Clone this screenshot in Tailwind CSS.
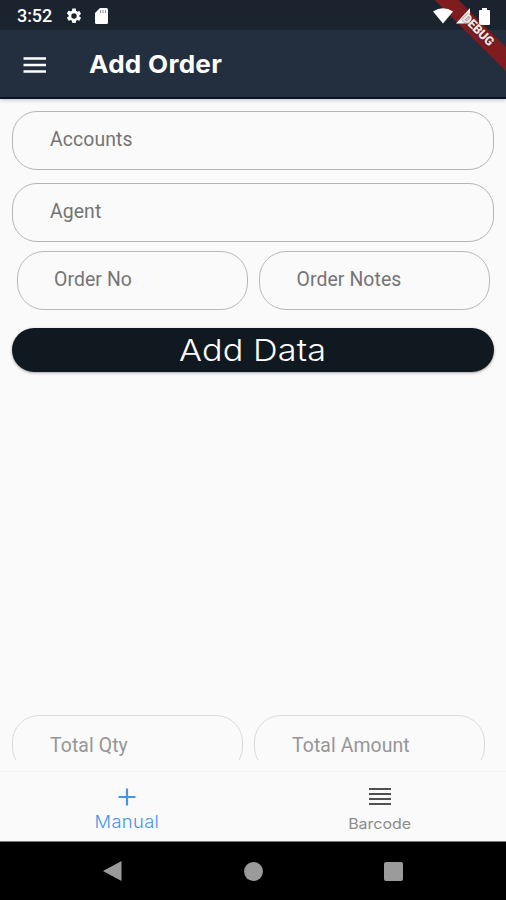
<!DOCTYPE html>
<html lang="en">
<head>
<meta charset="utf-8">
<title>Add Order</title>
<script src="https://cdn.jsdelivr.net/npm/@tailwindcss/browser@4"></script>
</head>
<body class="bg-[#fafafa]">
<div class="relative flex h-[900px] w-[506px] flex-col overflow-hidden bg-[#fafafa] font-[Roboto,sans-serif]">
  <div class="flex h-[30px] shrink-0 items-center bg-[#1b242e] pl-[17px] pr-[16px] pt-[2px] text-white">
    <span class="w-[48px] text-[18px] leading-none font-medium tracking-[-0.1px]">3:52</span>
    <svg class="h-[18px] w-[18px]" viewBox="0 0 24 24" fill="currentColor"><path d="M19.14 12.94c.04-.3.06-.61.06-.94s-.02-.64-.07-.94l2.03-1.58a.49.49 0 0 0 .12-.61l-1.92-3.32a.49.49 0 0 0-.59-.22l-2.39.96a7 7 0 0 0-1.62-.94l-.36-2.54A.48.48 0 0 0 13.92 2h-3.84a.48.48 0 0 0-.48.41l-.36 2.54a7 7 0 0 0-1.62.94l-2.39-.96a.48.48 0 0 0-.59.22L2.72 8.47a.48.48 0 0 0 .12.61l2.03 1.58a6 6 0 0 0 0 1.88l-2.03 1.58a.49.49 0 0 0-.12.61l1.92 3.32c.12.22.37.29.59.22l2.39-.96c.5.38 1.03.7 1.62.94l.36 2.54c.05.24.24.41.48.41h3.84c.24 0 .44-.17.47-.41l.36-2.54a7 7 0 0 0 1.62-.94l2.39.96c.22.08.47 0 .59-.22l1.92-3.32a.48.48 0 0 0-.12-.61zM12 15.6A3.6 3.6 0 1 1 12 8.4a3.6 3.6 0 0 1 0 7.2z"/></svg>
    <svg class="ml-[12px] h-[16px] w-[13px]" viewBox="0 0 13 16"><path d="M5 0h6.5Q13 0 13 1.5v13Q13 16 11.500 16h-10Q0 16 0 14.500V5z" fill="#fff"/><path d="M5.500 2v3M8 2v3M10.500 2v3" stroke="#8a9096" stroke-width="1"/></svg>
    <div class="relative z-30 ml-auto flex items-center">
      <svg class="h-[16px] w-[20px]" viewBox="0 0 20 16" fill="#fff"><path d="M0 3.500Q10-3 20 3.500L10 15.500z"/></svg>
      <svg class="ml-[3px] h-[16px] w-[14px]" viewBox="0 0 14 16" fill="#fff"><path d="M14 0v15.500H0z"/></svg>
      <svg class="ml-[9px] h-[17px] w-[11px]" viewBox="0 0 11 18" preserveAspectRatio="none" fill="#fff"><path d="M3 0h5v2h2q1 0 1 1v14q0 1-1 1H1q-1 0-1-1V3q0-1 1-1h2z"/></svg>
    </div>
  </div>
  <header class="z-10 flex h-[69px] shrink-0 items-center border-b-2 border-[#0d1420] bg-[#232f3e] pt-[2px] pl-[23px] text-white shadow-[0_1px_4px_rgba(40,60,80,0.3)]">
    <svg class="h-[18px] w-[24px]" viewBox="0 0 24 18"><path d="M0.500 2.500h22.500M0.500 9h22.500M0.500 15.500h22.500" stroke="#fff" stroke-width="2.500"/></svg>
    <h1 class="ml-[42px] origin-left scale-x-[1.065] text-[24.500px] leading-none font-bold tracking-[0.250px] font-[Inter,sans-serif]">Add Order</h1>
  </header>
  <main class="flex min-h-0 flex-1 flex-col px-[12px] pt-[12px] text-[19.400px] tracking-[0.100px] text-[#747474]">
    <div class="flex h-[59px] w-[482px] items-center rounded-[25px] border border-[#b5b5b5] pb-px pl-[37px]">Accounts</div>
    <div class="mt-[13px] flex h-[59px] w-[482px] items-center rounded-[25px] border border-[#b5b5b5] pb-px pl-[37px]">Agent</div>
    <div class="mt-[9px] flex gap-[11px] pl-[5px]">
      <div class="flex h-[59px] w-[231px] items-center rounded-[27px] border border-[#b9b9b9] pb-px pl-[36px]">Order No</div>
      <div class="flex h-[59px] w-[231px] items-center rounded-[27px] border border-[#b9b9b9] pb-px pl-[36.500px]">Order Notes</div>
    </div>
    <button class="mt-[18px] flex h-[44px] w-[482px] items-center justify-center rounded-full bg-[#101820] text-[30px] leading-none font-light text-white shadow-[0_1px_3px_rgba(0,0,0,0.350)] font-[Inter,sans-serif]"><span class="scale-x-[1.140]">Add Data</span></button>
    <div class="mt-auto mb-[11px] flex h-[45px] gap-[11px] overflow-hidden text-[#969696]">
      <div class="flex h-[59px] w-[231px] shrink-0 items-center rounded-[27px] border border-[#dadada] pt-[2px] pl-[37px]">Total Qty</div>
      <div class="flex h-[59px] w-[231px] shrink-0 items-center rounded-[27px] border border-[#dadada] pt-[2px] pl-[37px]">Total Amount</div>
    </div>
  </main>
  <nav class="grid h-[71px] shrink-0 grid-cols-2 border-t border-[#f0f0f0] border-b-[#777] border-b bg-[#fafafa] font-[Inter,sans-serif]">
    <div class="flex flex-col items-center pt-[16px] text-[#4495e8]">
      <svg class="h-[18px] w-[18px]" viewBox="0 0 18 18"><path d="M9 0.500v17M0.500 9h17" stroke="currentColor" stroke-width="2.200"/></svg>
      <span class="mt-[6px] scale-x-[1.080] text-[17px] leading-[20px] font-light tracking-[0.300px]">Manual</span>
    </div>
    <div class="flex flex-col items-center pt-[15px] text-[#8c8c8c]">
      <svg class="h-[19px] w-[22px]" viewBox="0 0 22 19"><path d="M0 2h22M0 7h22M0 12h22M0 17h22" stroke="#505050" stroke-width="2"/></svg>
      <span class="mt-[8px] scale-x-[1.100] text-[14.500px] leading-[20px]">Barcode</span>
    </div>
  </nav>
  <footer class="flex h-[58px] shrink-0 items-center bg-black pl-[103px]">
    <svg class="h-[22px] w-[20px]" viewBox="0 0 20 22"><path d="M0 11L18.500 1v20z" fill="#9b9b9b"/></svg>
    <span class="ml-[121px] h-[19px] w-[19px] rounded-full bg-[#9b9b9b]"></span>
    <span class="ml-[121px] h-[19px] w-[19px] rounded-[2px] bg-[#9b9b9b]"></span>
  </footer>
  <div class="absolute top-[22px] left-[407px] z-20 h-[17px] w-[140px] rotate-45 bg-[#7e1c20]"></div>
  <div class="absolute top-[22px] left-[408px] z-40 flex h-[16px] w-[140px] rotate-45 items-center justify-center text-[12.500px] leading-none font-black tracking-[-0.200px] text-[#f0e6e6] [text-shadow:0_0_2px_#4a1518]">DEBUG</div>
</div>
</body>
</html>
